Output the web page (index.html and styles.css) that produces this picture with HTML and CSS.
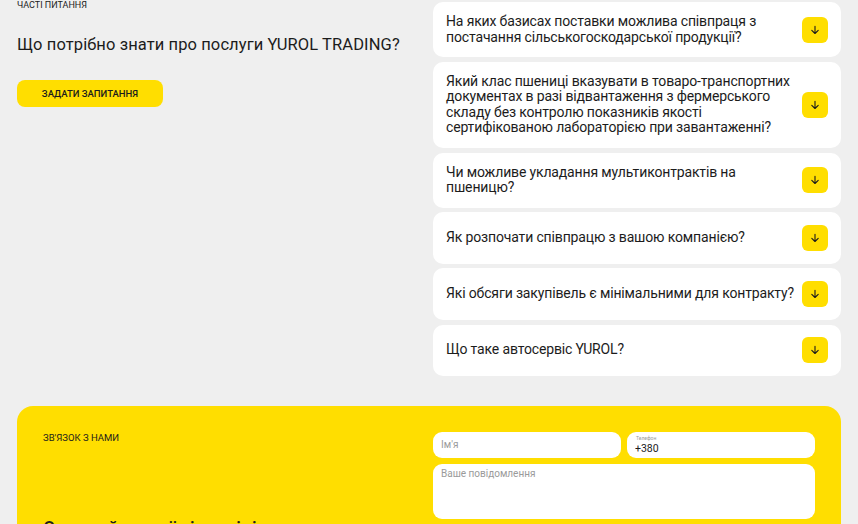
FILE: index.html
```html
<!DOCTYPE html>
<html lang="uk">
<head>
  <meta charset="UTF-8" />
  <meta name="viewport" content="width=device-width, initial-scale=1.0"/>
  <title>YUROL TRADING — часті питання</title>
  <link rel="stylesheet" href="styles.css">
</head>
<body>

  <section class="faq">
    <div class="faq-intro">
      <p class="eyebrow">Часті питання</p>
      <h2>Що потрібно знати про послуги YUROL TRADING?</h2>
      <button type="button" class="btn-ask">Задати запитання</button>
    </div>

    <div class="faq-list">
      <div class="faq-item">
        <p>На яких базисах поставки можлива співпраця з постачання сільськогоскодарської продукції?</p>
        <span class="faq-toggle"><svg viewBox="0 0 10 10"><path d="M5 1.2v7.3M1.8 5.3 5 8.5l3.2-3.2"/></svg></span>
      </div>
      <div class="faq-item">
        <p>Який клас пшениці вказувати в товаро-транспортних документах в разі відвантаження з фермерського складу без контролю показників якості сертифікованою лабораторією при завантаженні?</p>
        <span class="faq-toggle"><svg viewBox="0 0 10 10"><path d="M5 1.2v7.3M1.8 5.3 5 8.5l3.2-3.2"/></svg></span>
      </div>
      <div class="faq-item">
        <p>Чи можливе укладання мультиконтрактів на пшеницю?</p>
        <span class="faq-toggle"><svg viewBox="0 0 10 10"><path d="M5 1.2v7.3M1.8 5.3 5 8.5l3.2-3.2"/></svg></span>
      </div>
      <div class="faq-item">
        <p>Як розпочати співпрацю з вашою компанією?</p>
        <span class="faq-toggle"><svg viewBox="0 0 10 10"><path d="M5 1.2v7.3M1.8 5.3 5 8.5l3.2-3.2"/></svg></span>
      </div>
      <div class="faq-item">
        <p>Які обсяги закупівель є мінімальними для контракту?</p>
        <span class="faq-toggle"><svg viewBox="0 0 10 10"><path d="M5 1.2v7.3M1.8 5.3 5 8.5l3.2-3.2"/></svg></span>
      </div>
      <div class="faq-item">
        <p>Що таке автосервіс YUROL?</p>
        <span class="faq-toggle"><svg viewBox="0 0 10 10"><path d="M5 1.2v7.3M1.8 5.3 5 8.5l3.2-3.2"/></svg></span>
      </div>
    </div>
  </section>

  <section class="contact">
    <div class="contact-info">
      <p class="eyebrow">Зв'язок з нами</p>
      <h3>Отримайте свої відповіді</h3>
    </div>
    <form class="contact-form">
      <div class="field">
        <input type="text" placeholder="Ім'я" />
      </div>
      <div class="field field-phone">
        <label>Телефон</label>
        <input type="tel" value="+380" />
      </div>
      <div class="field field-wide">
        <textarea placeholder="Ваше повідомлення"></textarea>
      </div>
    </form>
  </section>

</body>
</html>
```

FILE: styles.css
```css
body {
  margin: 0;
  padding: 0 17px;
  background-color: #efefef;
  font-family: Roboto, "Noto Sans", sans-serif;
  color: #1c1c1c;
}
p, h2, h3 {
  margin: 0;
}
.eyebrow {
  font-size: 9px;
  line-height: 11px;
  font-weight: 400;
  text-transform: uppercase;
}

/* FAQ */
.faq {
  display: grid;
  grid-template-columns: 1fr 408px;
  column-gap: 16px;
  padding-top: 2px;
}
.faq-intro {
  margin-top: -2px;
}
.faq-intro h2 {
  margin-top: 23px;
  font-size: 16.5px;
  line-height: 22px;
  font-weight: 400;
  letter-spacing: 0.1px;
}
.btn-ask {
  margin-top: 24px;
  width: 146px;
  height: 27px;
  border: none;
  border-radius: 8px;
  background-color: #ffde00;
  color: #1c1c1c;
  font-family: inherit;
  font-size: 9.5px;
  font-weight: 500;
  text-transform: uppercase;
  cursor: pointer;
}
.faq-list {
  display: flex;
  flex-direction: column;
  gap: 4.8px;
}
.faq-item {
  display: flex;
  align-items: center;
  gap: 8px;
  min-height: 27.3px;
  padding: 12px 13px;
  background: #fff;
  border-radius: 10px;
}
.faq-item p {
  flex: 1;
  font-size: 14px;
  line-height: 15.5px;
  letter-spacing: -0.15px;
}
.faq-toggle {
  flex: none;
  width: 26px;
  height: 26px;
  border-radius: 6px;
  background-color: #ffde00;
  display: flex;
  align-items: center;
  justify-content: center;
}
.faq-toggle svg {
  width: 10px;
  height: 10px;
  fill: none;
  stroke: #1c1c1c;
  stroke-width: 1.1;
  stroke-linecap: round;
  stroke-linejoin: round;
}

/* contact */
.contact {
  margin-top: 30px;
  display: grid;
  grid-template-columns: 1fr 382px;
  column-gap: 16px;
  padding: 26px 26px 30px;
  background-color: #ffde00;
  border-radius: 16px;
}
.contact .eyebrow {
  font-size: 9.5px;
}
.contact-info h3 {
  margin-top: 74px;
  font-size: 18px;
  font-weight: 500;
}
.contact-form {
  display: grid;
  grid-template-columns: 1fr 1fr;
  align-content: start;
  gap: 6px;
}
.field {
  position: relative;
  background: #fff;
  border-radius: 9px;
  height: 26px;
}
.field input,
.field textarea {
  width: 100%;
  height: 100%;
  box-sizing: border-box;
  border: none;
  background: transparent;
  padding: 0 8px;
  font-family: inherit;
  font-size: 10px;
  color: #1c1c1c;
  outline: none;
  resize: none;
}
.field input::placeholder,
.field textarea::placeholder {
  color: #9a9a9a;
}
.field-phone label {
  position: absolute;
  left: 9px;
  top: 3px;
  font-size: 5px;
  color: #9a9a9a;
}
.field-phone input {
  padding-top: 7px;
  font-size: 10.5px;
}
.field-wide {
  grid-column: span 2;
  height: 55px;
}
.field-wide textarea {
  padding-top: 4px;
}
```
